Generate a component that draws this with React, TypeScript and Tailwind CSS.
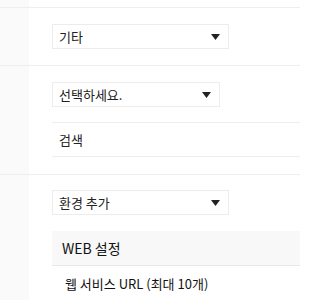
import React from "react";

const font = { fontFamily: '"Noto Sans CJK KR", "Noto Sans", sans-serif' };

const Arrow = () => (
  <svg width="9" height="6" viewBox="0 0 9 6" className="shrink-0">
    <path d="M0 0H9L4.5 6Z" fill="#222" />
  </svg>
);

const SelectBox = ({ label, width }: { label: string; width: string }) => (
  <div
    className={`${width} h-[25px] border border-[#ececec] bg-white flex items-center justify-between pl-[6px] pr-[8px] text-[13px] text-[#222]`}
  >
    <span>{label}</span>
    <Arrow />
  </div>
);

const Row = ({ children }: { children: React.ReactNode }) => (
  <div className="flex border-b border-[#eeeeee]">
    <div className="w-[29px] shrink-0 bg-[#fafafa]" />
    <div className="flex-1 pl-[23px]">{children}</div>
  </div>
);

export default function App() {
  return (
    <div className="w-[300px] h-[300px] overflow-hidden bg-white" style={font}>
      <Row>
        <div className="h-[7px]" />
      </Row>
      <Row>
        <div className="pt-[16px] pb-[16px]">
          <SelectBox label="기타" width="w-[177px]" />
        </div>
      </Row>
      <Row>
        <div className="pt-[16px] pb-[17px]">
          <SelectBox label="선택하세요." width="w-[168px]" />
          <div className="mt-[15px] border-t border-b border-[#eeeeee] h-[35px] flex items-center pl-[7px] text-[13px] text-[#222]">
            검색
          </div>
        </div>
      </Row>
      <Row>
        <div className="pt-[15px]">
          <SelectBox label="환경 추가" width="w-[177px]" />
          <div className="mt-[16px] h-[35px] bg-[#f8f8f8] border-b border-[#e8e8e8] flex items-center pl-[10px] text-[14px] text-[#111]">
            WEB 설정
          </div>
          <div className="h-[35px] flex items-center pl-[13px] text-[13px] text-[#111]">
            웹 서비스 URL (최대 10개)
          </div>
        </div>
      </Row>
    </div>
  );
}
